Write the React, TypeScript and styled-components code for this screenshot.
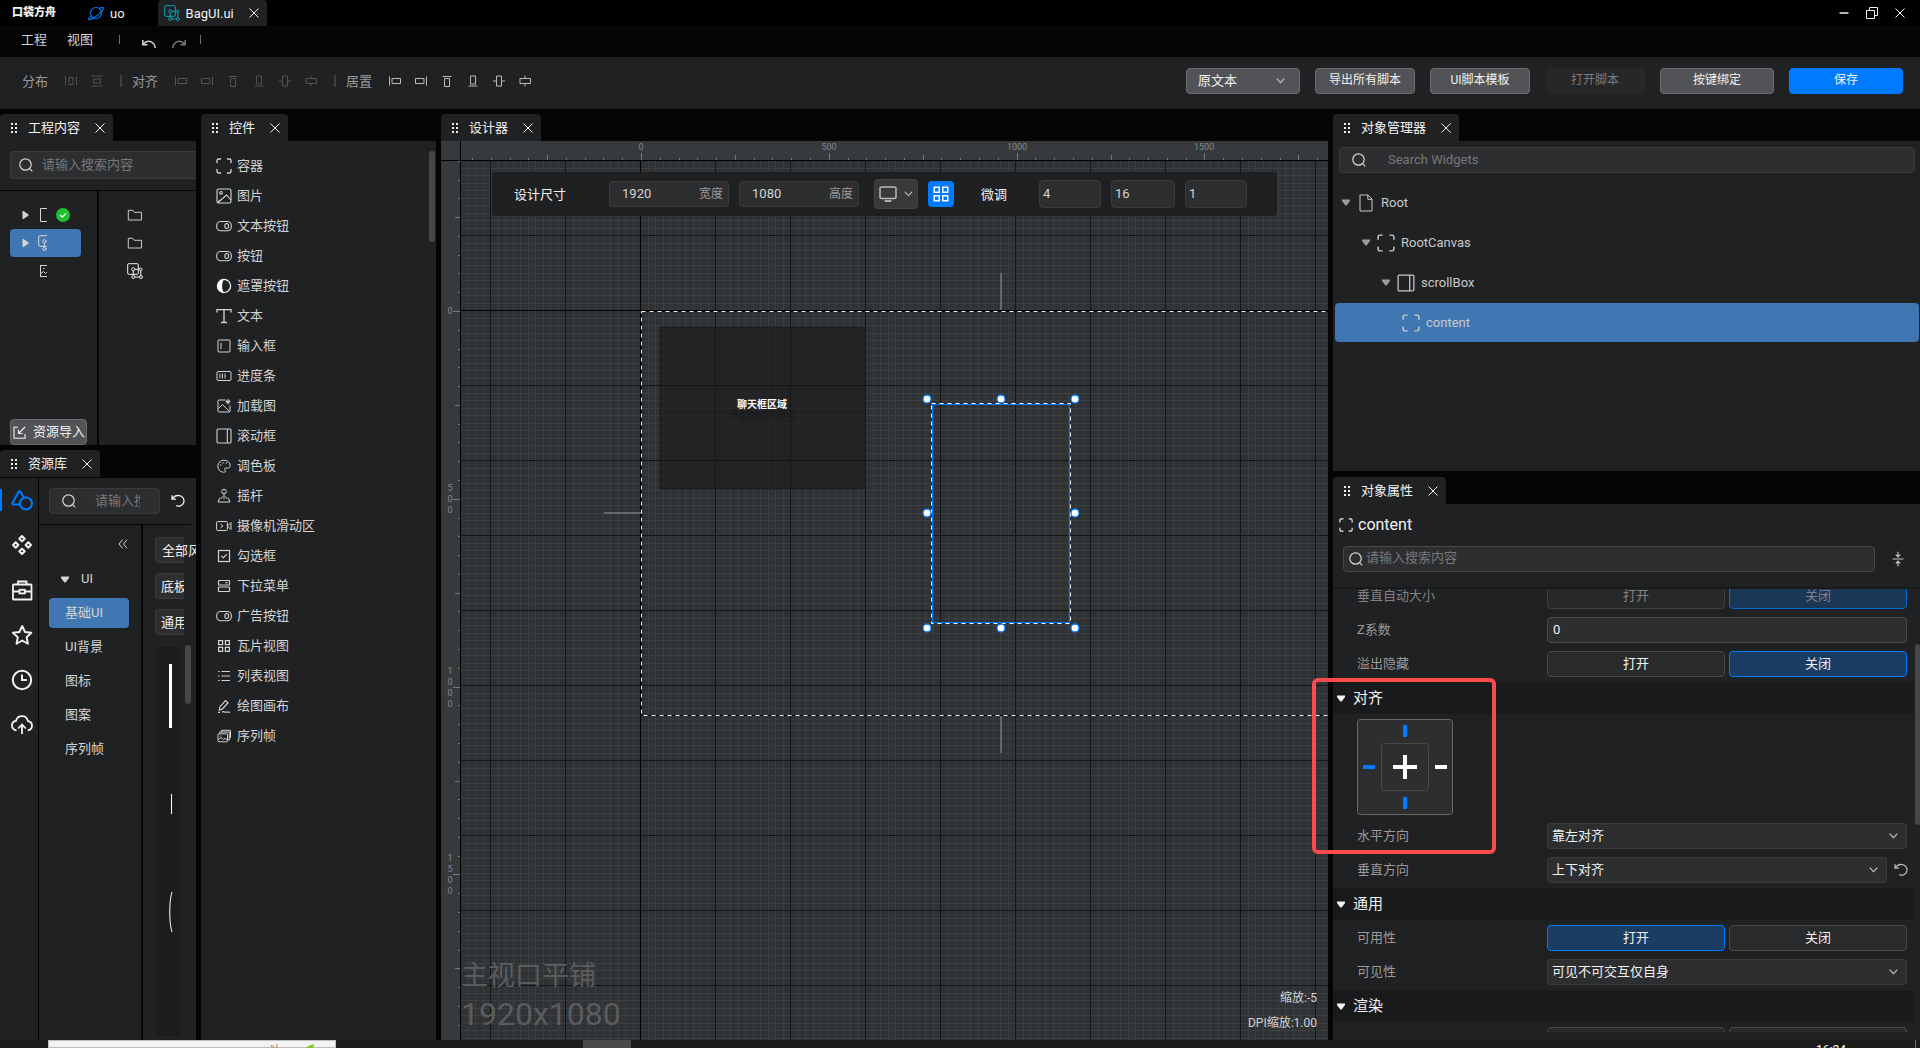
import React from 'react';
import styled, { createGlobalStyle, css } from 'styled-components';

const C = {
  base: '#050505',
  panel: '#202123',
  field: '#2d2e30',
  fieldLine: '#3a3b3d',
  button: '#525356',
  buttonLine: '#6b6c6e',
  blue: '#007aff',
  select: '#4077b2',
  deep: '#1b3d63',
  text: '#d4d4d4',
  bright: '#f2f2f2',
  dim: '#9a9a9b',
  faint: '#77787a',
};

const Global = createGlobalStyle`
  * { box-sizing: border-box; }
  body { margin: 0; background: ${C.base}; overflow: hidden; }
  body, button, input, select {
    font-family: Roboto, "Noto Sans CJK SC", sans-serif;
    font-size: 13px;
    line-height: 20px;
    color: ${C.text};
  }
  button, input, select { margin: 0; padding: 0; border: 0; background: none; outline: 0; }
  ul { list-style: none; margin: 0; padding: 0; }
  svg { display: block; flex: none; }
`;

/* ---------- icons ---------- */

type GlyphProps = { w?: number; h?: number; box?: string; sw?: number; children: React.ReactNode };
const Glyph = ({ w = 16, h, box = '0 0 16 16', sw = 1, children }: GlyphProps) => (
  <svg width={w} height={h ?? w} viewBox={box} fill="none" stroke="currentColor" strokeWidth={sw} aria-hidden="true">
    {children}
  </svg>
);

const Dots = () => (
  <Glyph w={10} h={14} box="0 0 10 14" sw={0}>
    <path fill="currentColor" d="M2 2h2v2H2zM6 2h2v2H6zM2 6h2v2H2zM6 6h2v2H6zM2 10h2v2H2zM6 10h2v2H6z" />
  </Glyph>
);
const Cross = ({ w = 10 }: { w?: number }) => (
  <Glyph w={w} box="0 0 10 10"><path d="M.5.5l9 9M9.5.5l-9 9" /></Glyph>
);
const Search = ({ w = 14 }: { w?: number }) => (
  <Glyph w={w} box="0 0 14 14" sw={1.2}><circle cx="6.5" cy="6.5" r="5.7" /><path d="M10.7 10.7l2.6 2.6" /></Glyph>
);
const Chevron = () => <Glyph w={9} h={6} box="0 0 9 6" sw={1.1}><path d="M.7.7l3.8 4 3.8-4" /></Glyph>;
const TriDown = () => <Glyph w={8} h={7} box="0 0 8 7" sw={0}><path fill="currentColor" d="M0 .5h8V2L4.6 6.5H3.4L0 2z" /></Glyph>;
const TriRight = () => <Glyph w={7} h={8} box="0 0 7 8" sw={0}><path fill="currentColor" d="M.5 0H1.5L6.5 3.5V4.5L1.5 8H.5z" /></Glyph>;
const Reset = ({ w = 14 }: { w?: number }) => (
  <Glyph w={w} box="0 0 14 14" sw={1.3}><path d="M1 1.2v4h4M1.3 5C3 2 6 1.2 8.600 1.700a5.300 5.300 0 1 1-3.600 9.800" /></Glyph>
);
const Blueprint = ({ w = 16 }: { w?: number }) => (
  <Glyph w={w}>
    <rect x="0.700" y="0.700" width="10.600" height="10.600" rx="1" />
    <circle cx="6.300" cy="6.300" r="1.600" /><circle cx="13.700" cy="6.300" r="1.300" />
    <circle cx="6.300" cy="14" r="1.500" /><circle cx="13.900" cy="14" r="1.500" />
    <path d="M8 6.300h4.400M8 14h4.200M6.300 8v4.400M13.800 7.700v4.700" />
  </Glyph>
);
const Container = ({ w = 16 }: { w?: number }) => (
  <Glyph w={w} sw={1.3}><path d="M1 5V2.500A1.500 1.500 0 0 1 2.500 1H5M11 1h2.500A1.500 1.500 0 0 1 15 2.500V5M15 11v2.500a1.500 1.500 0 0 1-1.500 1.500H11M5 15H2.500A1.500 1.500 0 0 1 1 13.500V11" /></Glyph>
);
const Picture = () => (
  <Glyph sw={1.1}><rect x="1" y="1" width="14" height="14" rx="1.500" /><circle cx="5" cy="4.800" r="1.300" /><path d="M2 14.500l8.500-7.500 4.500 5M4.500 12l-2.500 2" /></Glyph>
);
const Toggle = () => (
  <Glyph sw={1.1}><rect x="0.700" y="3.500" width="14.600" height="9.200" rx="4" /><ellipse cx="10.700" cy="8" rx="1.900" ry="2.500" /></Glyph>
);
const Mask = () => (
  <Glyph sw={1.2}><circle cx="8" cy="8" r="6.600" stroke="#fff" /><path fill="#fff" stroke="none" d="M8 1.400a6.600 6.600 0 0 0 0 13.200c-1.300-1.600-1.900-4-1.900-6.600S6.700 3 8 1.400z" /></Glyph>
);
const LetterMark = () => <Glyph sw={1.3}><path d="M1 4.500V1.700h14v2.800M8 1.700v13M5 14.500h6" /></Glyph>;
const InputIcon = () => <Glyph><rect x="2" y="2" width="12" height="12" rx="1" /><path d="M5 4.800v6.400" /></Glyph>;
const Progress = () => <Glyph><rect x="1" y="3.500" width="14" height="9" rx="1" /><path d="M4 5.500v5M6.500 5.500v5M9 5.500v5" /></Glyph>;
const LoadPic = () => (
  <Glyph><path d="M9.500 2H3a1 1 0 0 0-1 1v10a1 1 0 0 0 1 1h10a1 1 0 0 0 1-1V7.500M2.500 10.500l4-4 7 7M12 1v5.400M9.500 3.700h5M10.200 1.900l3.600 3.600M13.800 1.900l-3.600 3.600" /></Glyph>
);
const ScrollIcon = ({ w = 16 }: { w?: number }) => (
  <Glyph w={w} sw={1.1}><rect x="1" y="1" width="14" height="14" rx="1" /><path d="M11.300 1v14" /></Glyph>
);
const Palette = () => (
  <Glyph><path d="M9.500 13.600c-1 .8-1.800.7-3 .5C3.600 13.500 1.700 11 1.800 8 2 4.600 4.700 2.200 8 2.200s6 2.200 6.200 5c.1 2-1 2.900-2.600 2.900H9.700c-1.300.1-1.500 1-.8 2 .4.600.7 1 .6 1.500z" /><path d="M4.300 7h1M6.500 5h1M9.800 5h1" strokeWidth="1.300" /></Glyph>
);
const Joystick = () => (
  <Glyph><circle cx="8" cy="3.500" r="2.300" /><path d="M8 5.800V11M6.500 8.500C6.300 10 5 10 3.500 10.500L2 14h12l-1.500-3.500C11 10 9.700 10 9.500 8.500" /></Glyph>
);
const Camera = () => (
  <Glyph><rect x="0.600" y="3.500" width="10.800" height="9" rx="1" /><path d="M11.500 8l3.500-3.500v7zM4.500 6l2.500 2-2.500 2" /></Glyph>
);
const CheckBoxIcon = () => <Glyph sw={1.2}><rect x="2.500" y="2.500" width="11" height="11" /><path d="M5.300 7.800l2 2 3.500-3.600" /></Glyph>;
const MenuIcon = () => <Glyph sw={1.2}><rect x="2.500" y="2.500" width="11" height="4.500" rx=".5" /><rect x="2.500" y="9" width="11" height="4.500" rx=".5" /><path d="M9.500 4.700h2" /></Glyph>;
const TileIcon = ({ w = 16 }: { w?: number }) => (
  <Glyph w={w} sw={1.200}><path d="M2.600 2.600h4v4h-4zM9.400 2.600h4v4h-4zM2.600 9.400h4v4h-4zM9.400 9.400h4v4h-4z" /></Glyph>
);
const ListIcon = () => <Glyph sw={1.2}><path d="M2 3.500h1.500M5.500 3.500H14M2 8h1.500M5.500 8H14M2 12.500h1.500M5.500 12.500H14" /></Glyph>;
const PenIcon = () => <Glyph sw={1.2}><path d="M3.300 12l.7-3.300L9.500 2.500l2.500 2.200L6.500 11zM2 14.300h2M6 14.300c2-1.600 2.500.3 4-.1s2-.4 4 .1" /></Glyph>;
const SequenceIcon = () => (
  <Glyph><rect x="2" y="5.800" width="9.500" height="8" rx="1" /><path d="M3.700 5.500V4h9.600v8h-1.500M5.500 3.700V2.300h9v7.500h-1M2.500 11.500l2.500-2 2.500 2 1.500-1.200 2 1.500" /><path d="M4.300 8h1" /></Glyph>
);
const FolderIcon = () => <Glyph><path d="M1.300 13V3.300h4.500l1.500 2h7.200V13z" /></Glyph>;
const FileIcon = () => <Glyph w={18} box="0 0 18 18"><path d="M3 1h8l4 4v12H3zM10.800 1v4.300H15" /></Glyph>;
const ImportIcon = () => <Glyph w={13} box="0 0 13 13" sw={1.1}><path d="M5 1.300H1v10.900h11V8M12 1L6 7M5.500 3.700v3.800h4" /></Glyph>;
const Monitor = () => (
  <Glyph w={18} h={16} box="0 0 18 16" sw={1.500}><rect x="1" y="1" width="16" height="11.500" rx="1.500" /><path d="M5.500 15h7" strokeWidth="1.800" /></Glyph>
);
const Planet = () => (
  <Glyph w={16} sw={1.2}><circle cx="8" cy="8" r="5.500" /><path d="M3.500 11C1.200 12.600.3 13.800.8 14.300c.8.900 5.200-1.300 8.900-4.200S16 3.500 15.300 2.600c-.5-.6-2.200-.1-4.200.9" /></Glyph>
);

const Shapes = () => (
  <Glyph w={24} box="0 0 24 24" sw={2}><circle cx="16" cy="15.500" r="6" /><path d="M10.300 16.500H3.500c-1 0-1.300-.8-1-1.500L8.500 4c.5-.9 1.700-.9 2.200 0l3 5.500" /></Glyph>
);
const Diamonds = () => (
  <Glyph w={24} box="0 0 24 24" sw={2}>
    <path d="M12 3l2.700 2.700L12 8.400 9.300 5.700zM12 15.600l2.700 2.700L12 21l-2.700-2.700zM5.700 9.300L8.400 12l-2.700 2.700L3 12zM18.300 9.300L21 12l-2.700 2.700L15.600 12z" strokeLinejoin="round" />
  </Glyph>
);
const Toolbox = () => (
  <Glyph w={24} box="0 0 24 24" sw={1.800}>
    <rect x="3" y="6.500" width="18.500" height="15" rx=".6" /><path d="M8 6V3.500h8.500V6M3 13.500h6.500M14.800 13.500h6.700" /><rect x="9.500" y="11.800" width="5.300" height="3.600" />
  </Glyph>
);
const Star = () => (
  <Glyph w={24} box="0 0 24 24" sw={1.900}><path strokeLinejoin="round" d="M12.200 3l2.800 6 6.300.8-4.700 4.400 1.300 6.600-5.700-3.300-5.700 3.300 1.300-6.600L2.800 9.800 9.400 9z" /></Glyph>
);
const Clock = () => <Glyph w={24} box="0 0 24 24" sw={2}><circle cx="12" cy="12" r="9.200" /><path d="M12 6.500V12h5" /></Glyph>;
const Cloud = () => (
  <Glyph w={24} box="0 0 24 24" sw={1.800}>
    <path d="M6.500 17.500C3.500 16.800 2 15 2 12.500s2-4.300 4-4.600C6.800 4.800 9 3.200 12 3.200s5.300 2 6 5c2.500.4 4 2.200 4 4.500 0 2.500-1.600 4.300-4.300 4.700M12 21v-9M8.200 15.500l3.800-4 3.800 4" />
  </Glyph>
);

const alignPaths: Record<string, string> = {
  distH: 'M1.500 2.500v9M12.500 2.500v9M5 3.500h4v7H5z',
  distV: 'M1.500 2h11M1.500 12h11M3.500 5h7v4h-7z',
  left: 'M1.500 2.500v9M4 4.500h8.500v5H4z',
  right: 'M12.500 2.500v9M1.500 4.500H10v5H1.500z',
  top: 'M2.500 2.500h9M4.500 4.500h5v8h-5z',
  bottom: 'M2.500 12h9M4.500 2h5v8h-5z',
  midH: 'M4.500 2h5v10h-5zM1 7h3.500M9.500 7H13',
  midV: 'M2 4.500h10.500v5H2zM7 1.500v3M7 9.500v3',
};
const AlignIcon = ({ kind }: { kind: string }) => (
  <Glyph w={14} box="0 0 14 14"><path d={alignPaths[kind]} /></Glyph>
);

/* ---------- shared parts ---------- */

const Shell = styled.div`
  display: flex;
  flex-direction: column;
  height: 100vh;
  background: ${C.base};
`;
const IconButton = styled.button<{ $color?: string }>`
  display: flex;
  align-items: center;
  justify-content: center;
  color: ${p => p.$color ?? C.bright};
`;
const TabBar = styled.div`display: flex; height: 27px; flex: none;`;
const TabBox = styled.div`
  display: flex;
  align-items: center;
  padding: 0 8px 0 9px;
  border-radius: 4px 4px 0 0;
  background: ${C.panel};
  color: ${C.bright};
  white-space: nowrap;
`;
const TabName = styled.span`margin: 0 15px 0 9px; padding-top: 1px;`;
const Tab = ({ name }: { name: string }) => (
  <TabBar>
    <TabBox>
      <Dots /><TabName>{name}</TabName>
      <IconButton aria-label={`关闭${name}`}><Cross /></IconButton>
    </TabBox>
  </TabBar>
);
const Field = styled.label<{ $h?: number }>`
  display: flex;
  align-items: center;
  height: ${p => p.$h ?? 26}px;
  min-width: 0;
  border: 1px solid ${C.fieldLine};
  border-radius: 4px;
  background: ${C.field};
`;
const TextInput = styled.input`
  flex: 1;
  width: 0;
  min-width: 0;
  height: 20px;
  &::placeholder { color: ${C.faint}; opacity: 1; }
`;
const Thumb = styled.div<{ $h: number }>`
  width: 6px;
  height: ${p => p.$h}px;
  flex: none;
  border-radius: 3px;
  background: #454648;
`;

/* ---------- title, menu and tool bars ---------- */

const TitleBar = styled.header`
  display: flex;
  align-items: center;
  height: 26px;
  flex: none;
  padding: 0 15px 0 12px;
  background: #000;
  color: ${C.bright};
`;
const Logo = styled.span`width: 76px; font-size: 11px; font-weight: 900;`;
const DocName = styled.span`padding-top: 2px;`;
const DocTab = styled.div<{ $active?: boolean; $tint: string }>`
  display: flex;
  align-items: center;
  height: 26px;
  gap: 6px;
  > svg { color: ${p => p.$tint}; }
  ${p => p.$active && css`
    margin-left: 33px;
    padding: 0 8px 0 6px;
    border-radius: 4px 4px 0 0;
    background: ${C.panel};
    button { margin-left: 9px; }
  `}
`;
const WindowButtons = styled.div`display: flex; gap: 17px; margin-left: auto;`;
const MenuBar = styled.nav`
  display: flex;
  align-items: center;
  height: 31px;
  flex: none;
  padding: 0 21px 4px;
`;
const MenuItem = styled.button`margin-right: 20px;`;
const MenuRule = styled.i`width: 1px; height: 9px; background: #6d6d6d;`;
const History = styled.div`display: flex; gap: 16px; margin: 0 14px 0 22px; padding-top: 9px;`;
const MenuTools = styled.div`display: flex; align-items: center; margin-left: 6px;`;
const ToolBar = styled.div`
  display: flex;
  align-items: center;
  height: 52px;
  flex: none;
  padding: 0 17px 4px 22px;
  background: ${C.panel};
`;
const ToolLabel = styled.span`margin-right: 16px; padding-top: 2px; color: ${C.dim};`;
const ToolGroup = styled.div<{ $off?: boolean }>`
  display: flex;
  gap: 12px;
  button { color: ${p => (p.$off ? '#525355' : '#b9babb')}; }
`;
const ToolRule = styled.i`width: 2px; height: 12px; margin: 0 10px 0 16px; background: #3c3d3f;`;
const ToolActions = styled.div`display: flex; gap: 15px; margin-left: auto;`;
const ActionButton = styled.button<{ $w: number; $kind?: 'primary' | 'off' }>`
  width: ${p => p.$w}px;
  height: 26px;
  padding-bottom: 2px;
  border: 1px solid ${C.buttonLine};
  border-radius: 4px;
  background: ${C.button};
  color: ${C.bright};
  font-size: 12px;
  ${p => p.$kind === 'primary' && css`border-color: ${C.blue}; background: ${C.blue};`}
  ${p => p.$kind === 'off' && css`border-color: #262729; background: #262729; color: #7c7d7e;`}
`;

const SelectBox = styled.span<{ $button?: boolean }>`
  position: relative;
  display: flex;
  flex: 1;
  height: 26px;
  border: 1px solid ${p => (p.$button ? C.buttonLine : C.fieldLine)};
  border-radius: 4px;
  background: ${p => (p.$button ? C.button : C.field)};
  ${p => p.$button && css`flex: none; width: 114px;`}
  select { appearance: none; flex: 1; padding: 0 ${p => (p.$button ? 11 : 4)}px; color: ${C.bright}; }
  svg { position: absolute; right: ${p => (p.$button ? 14 : 8)}px; top: 9px; pointer-events: none; color: #c4c4c5; }
`;
const Select = ({ label, value, button }: { label: string; value: string; button?: boolean }) => (
  <SelectBox $button={button}>
    <select aria-label={label} defaultValue={value}><option>{value}</option></select>
    <Chevron />
  </SelectBox>
);

/* ---------- work area ---------- */

const Work = styled.main`
  display: grid;
  grid-template-columns: 196px 235px minmax(0, 1fr) 587px;
  gap: 5px;
  flex: 1;
  min-height: 0;
  padding-top: 5px;
`;
const Column = styled.div<{ $gap?: number }>`
  display: flex;
  flex-direction: column;
  gap: ${p => p.$gap ?? 0}px;
  min-width: 0;
  min-height: 0;
`;
const Panel = styled.section<{ $grow?: boolean }>`
  position: relative;
  display: flex;
  flex-direction: column;
  min-height: 0;
  ${p => p.$grow && css`flex: 1;`}
`;
const Body = styled.div<{ $h?: number; $row?: boolean; $line?: boolean }>`
  display: flex;
  flex-direction: ${p => (p.$row ? 'row' : 'column')};
  min-height: 0;
  background: ${C.panel};
  ${p => (p.$h ? css`height: ${p.$h}px;` : css`flex: 1;`)}
  ${p => p.$line && css`border-top: 1px solid ${C.base};`}
  overflow: hidden;
`;

const ProjectSearch = styled.div`
  padding: 10px 0 11px 10px;
  border-bottom: 1px solid ${C.base};
  label { border-right: 0; border-radius: 4px 0 0 4px; padding-left: 8px; gap: 9px; }
`;
const Split = styled.div`display: flex; flex: 1; min-height: 0;`;
const TreeSide = styled.div`
  display: flex;
  flex-direction: column;
  width: 99px;
  padding-top: 10px;
  border-right: 2px solid ${C.base};
`;
const TreeNode = styled.button<{ $on?: boolean; $leaf?: boolean }>`
  display: flex;
  align-items: center;
  gap: 9px;
  width: 71px;
  height: 28px;
  margin-left: 10px;
  padding-left: ${p => (p.$leaf ? 28 : 12)}px;
  border-radius: 4px;
  background: ${p => (p.$on ? C.select : 'none')};
`;
const IconSlice = styled.span`width: 9px; overflow: hidden;`;
const ImportButton = styled.button`
  display: flex;
  align-items: center;
  gap: 7px;
  width: 77px;
  height: 26px;
  margin: auto 0 0 10px;
  padding-left: 2px;
  border: 1px solid ${C.buttonLine};
  border-radius: 4px;
  background: ${C.button};
  color: ${C.bright};
  white-space: nowrap;
`;
const AssetSide = styled.div`
  flex: 1;
  padding: 10px 0 0 28px;
  button { height: 28px; }
`;

const Rail = styled.div`width: 39px; flex: none; border-right: 1px solid ${C.base};`;
const RailButton = styled.button<{ $on?: boolean }>`
  position: relative;
  display: flex;
  align-items: center;
  width: 38px;
  height: 45px;
  padding: 0 0 2px 10px;
  color: ${p => (p.$on ? C.blue : C.bright)};
  ${p => p.$on && css`
    &::before { content: ''; position: absolute; left: 0; top: 11px; width: 2px; height: 22px; background: ${C.blue}; }
  `}
`;
const LibrarySearch = styled.div`
  display: flex;
  align-items: center;
  gap: 11px;
  height: 47px;
  padding-left: 10px;
  border-bottom: 1px solid ${C.base};
  label { width: 111px; padding: 0 19px 0 12px; gap: 19px; }
`;
const CategoryList = styled.div`width: 104px; flex: none; border-right: 2px solid ${C.base};`;
const Collapse = styled.button`
  display: flex;
  align-items: center;
  justify-content: flex-end;
  width: 89px;
  height: 37px;
`;
const CategoryHead = styled.button`
  display: flex;
  align-items: center;
  gap: 12px;
  height: 34px;
  padding-left: 22px;
`;
const Category = styled.button<{ $on?: boolean }>`
  display: block;
  width: 80px;
  height: 30px;
  margin: 2px 0 4px 10px;
  padding-left: 16px;
  border-radius: 4px;
  background: ${p => (p.$on ? C.select : 'none')};
  text-align: left;
`;
const StyleList = styled.div`
  display: flex;
  flex-direction: column;
  flex: 1;
  gap: 10px;
  padding: 12px 0 3px 12px;
`;
const StyleChip = styled.button<{ $open?: boolean }>`
  width: 29px;
  height: 26px;
  flex: none;
  padding: 2px 0 0 ${p => (p.$open ? 6 : 5)}px;
  border: 1px solid ${C.fieldLine};
  border-right: 0;
  border-radius: 4px 0 0 4px;
  background: ${C.field};
  color: ${C.bright};
  text-align: left;
  white-space: nowrap;
  overflow: ${p => (p.$open ? 'visible' : 'hidden')};
`;
const Preview = styled.div`
  width: 27px;
  border: 1px solid #232426;
  border-radius: 4px;
  background: #1b1c1e;
  overflow: hidden;
`;
const PreviewRow = styled.div`display: flex; flex: 1; gap: 3px; min-height: 0;`;

const WidgetList = styled.ul`flex: 1; padding: 10px 0 0 15px;`;
const WidgetButton = styled.button`display: flex; align-items: center; gap: 5px; height: 30px;`;
const ListScroll = styled.div`padding: 10px 1px 0 0;`;

const widgets: [string, React.ReactNode][] = [
  ['容器', <Container />], ['图片', <Picture />], ['文本按钮', <Toggle />], ['按钮', <Toggle />],
  ['遮罩按钮', <Mask />], ['文本', <LetterMark />], ['输入框', <InputIcon />], ['进度条', <Progress />],
  ['加载图', <LoadPic />], ['滚动框', <ScrollIcon />], ['调色板', <Palette />], ['摇杆', <Joystick />],
  ['摄像机滑动区', <Camera />], ['勾选框', <CheckBoxIcon />], ['下拉菜单', <MenuIcon />], ['广告按钮', <Toggle />],
  ['瓦片视图', <TileIcon />], ['列表视图', <ListIcon />], ['绘图画布', <PenIcon />], ['序列帧', <SequenceIcon />],
];

/* ---------- designer ---------- */

const Stage = styled.div`
  display: grid;
  grid-template: 20px minmax(0, 1fr) / 20px minmax(0, 1fr);
  flex: 1;
  min-height: 0;
  background: #363a3c;
`;
const Corner = styled.div`border-right: 1px solid #000; border-bottom: 1px solid #000;`;
const RulerX = styled.div`border-bottom: 1px solid #000; overflow: hidden;`;
const RulerY = styled.div`border-right: 1px solid #000; overflow: hidden;`;
const RulerText = styled.text`font-size: 9px; fill: #85878a; stroke: none; text-anchor: middle;`;
const Canvas = styled.div`position: relative; overflow: hidden; background: #303335;`;
const Layer = styled.svg`position: absolute; inset: 0; width: 100%; height: 100%;`;
const Watermark = styled.div`
  position: absolute;
  left: 0;
  bottom: 7px;
  color: #5b5c5d;
  font-size: 27px;
  line-height: 38px;
`;
const WatermarkSize = styled.div`font-size: 32px;`;
const ZoomInfo = styled.div`
  position: absolute;
  right: 11px;
  bottom: 4px;
  font-size: 12px;
  line-height: 25px;
  text-align: right;
`;
const ChatArea = styled.div`
  position: absolute;
  left: 198px;
  top: 165px;
  display: flex;
  flex-direction: column;
  align-items: center;
  justify-content: center;
  width: 206px;
  height: 164px;
  padding-top: 4px;
  border-radius: 3px;
  background: rgba(22, 23, 24, 0.6);
  color: #fff;
  font-size: 10px;
  font-weight: 700;
  line-height: 10px;
`;
const ChatNote = styled.span`color: #17181a; font-size: 8px; font-weight: 400;`;
const SizeBar = styled.div`
  position: absolute;
  left: 31px;
  top: 11px;
  display: flex;
  align-items: center;
  height: 44px;
  padding: 0 30px 0 22px;
  border-radius: 4px;
  background: #1f2022;
  color: ${C.bright};
`;
const SizeTitle = styled.span<{ $after: number }>`margin-right: ${p => p.$after}px; padding-top: 1px;`;
const SizeField = styled(Field)`
  width: 120px;
  margin-right: 10px;
  padding: 0 5px 0 12px;
  color: ${C.dim};
  font-size: 12px;
`;
const StepField = styled(Field)<{ $w: number }>`
  width: ${p => p.$w}px;
  margin-left: 10px;
  padding-left: 3px;
`;
const DeviceButton = styled.button`
  display: flex;
  align-items: center;
  justify-content: center;
  gap: 7px;
  width: 44px;
  height: 30px;
  margin: 0 10px 0 5px;
  border: 1px solid #434446;
  border-radius: 4px;
  background: #38393b;
  color: #b9b9ba;
`;
const GridButton = styled.button`
  display: flex;
  align-items: center;
  justify-content: center;
  width: 26px;
  height: 26px;
  margin-right: 27px;
  border-radius: 4px;
  background: ${C.blue};
  color: #fff;
`;

const UNIT = 0.3756;
const marks = (from: number, to: number) => {
  const out: number[] = [];
  for (let v = from; v <= to; v += 50) out.push(v);
  return out;
};
const tickLength = (v: number) => (v % 500 === 0 ? 7 : v % 250 === 0 ? 5 : 2);

const HorizontalRuler = () => (
  <svg width="100%" height="19" stroke="#77797b" shapeRendering="crispEdges">
    {marks(-450, 8000).map(v => {
      const x = Math.round(180 + v * UNIT) + 0.5;
      return <path key={v} d={`M${x} ${19 - tickLength(v)}V19`} />;
    })}
    {marks(0, 8000).filter(v => v % 500 === 0).map(v => (
      <RulerText key={v} x={Math.round(180 + v * UNIT)} y={9}>{v}</RulerText>
    ))}
  </svg>
);
const VerticalRuler = () => (
  <svg width="19" height="100%" stroke="#77797b" shapeRendering="crispEdges">
    {marks(-400, 6000).map(v => {
      const y = Math.round(150 + v * UNIT) + 0.5;
      return <path key={v} d={`M${19 - tickLength(v)} ${y}H19`} />;
    })}
    {marks(0, 6000).filter(v => v % 500 === 0).map(v => {
      const digits = String(v).split('');
      const mid = Math.round(150 + v * UNIT);
      return digits.map((d, i) => (
        <RulerText key={`${v}-${i}`} x={9} y={mid + 3 + Math.round((i - (digits.length - 1) / 2) * 11)}>{d}</RulerText>
      ));
    })}
  </svg>
);

const minor = [8, 15, 23, 30, 38, 45, 53, 60, 68];
const Grid = () => (
  <Layer aria-hidden="true">
    <defs>
      <pattern id="grid" x="29" y="74" width="75" height="75" patternUnits="userSpaceOnUse">
        <path stroke="#3c3e40" shapeRendering="crispEdges" d={minor.map(m => `M${m}.5 0V75M0 ${m}.5H75`).join('')} />
        <path stroke="#151617" shapeRendering="crispEdges" d="M.5 0V75M0 .5H75" />
      </pattern>
    </defs>
    <rect width="100%" height="100%" fill="url(#grid)" />
    <rect x="179" width="1" height="100%" fill="#000" />
    <rect y="149" width="100%" height="1" fill="#000" />
  </Layer>
);
const handles = [466, 540, 614].flatMap(x => [238, 352, 467].map(y => [x, y])).filter(([x, y]) => x !== 540 || y !== 352);
const Frames = () => (
  <Layer aria-hidden="true" fill="none">
    <path stroke="#66686a" strokeWidth="2" d="M540 112v37M540 555v37M143 352h37" />
    <rect x="180.500" y="150.500" width="721" height="404" stroke="#000" />
    <rect x="180.500" y="150.500" width="721" height="404" stroke="#fff" strokeDasharray="4 4" />
    <rect x="471.500" y="243.500" width="137" height="218" stroke={C.blue} strokeWidth="1" />
    <rect x="470.500" y="242.500" width="139" height="220" stroke="#0a2e5c" />
    <rect x="470.500" y="242.500" width="139" height="220" stroke="#fff" strokeDasharray="4 4" />
    {handles.map(([x, y]) => <circle key={`${x}-${y}`} cx={x} cy={y} r="4" fill="#fff" stroke={C.blue} strokeWidth="1.300" />)}
  </Layer>
);

/* ---------- object manager and properties ---------- */

const ManagerSearch = styled(Field)`margin: 6px 5px 10px 6px; padding-left: 12px; gap: 22px; flex: none;`;
const ObjectList = styled.div`display: flex; flex-direction: column; gap: 1px;`;
const ObjectRow = styled.button<{ $depth: number; $on?: boolean }>`
  display: flex;
  align-items: center;
  height: 39px;
  margin: 0 1px 0 2px;
  padding-left: ${p => 7 + p.$depth * 20}px;
  border-radius: 4px;
  background: ${p => (p.$on ? C.select : 'none')};
  color: #c9c9ca;
`;
const Caret = styled.span`width: 8px; margin-right: 7px; color: #9b9c9d;`;
const ObjectName = styled.span`margin-left: 6px;`;

const objects: [string, React.ReactNode, boolean][] = [
  ['Root', <FileIcon />, true],
  ['RootCanvas', <Container w={18} />, true],
  ['scrollBox', <ScrollIcon w={18} />, true],
  ['content', <Container w={18} />, false],
];

const PropHead = styled.h2`
  display: flex;
  align-items: center;
  gap: 5px;
  height: 42px;
  margin: 0;
  padding-left: 6px;
  color: ${C.bright};
  font-size: 16px;
  font-weight: 400;
`;
const PropSearch = styled.div`
  display: flex;
  align-items: center;
  gap: 15px;
  height: 41px;
  padding: 0 14px 15px 10px;
  border-bottom: 0;
  flex: none;
  label { flex: 1; border-color: #47484a; padding-left: 5px; gap: 3px; }
  input { margin-bottom: 3px; }
`;
const PropScroll = styled.div`
  display: flex;
  flex: 1;
  margin-bottom: 8px;
  min-height: 0;
  border-top: 2px solid #191a1b;
  overflow: hidden;
`;
const PropList = styled.div`flex: 1; margin-top: -10px;`;
const PropThumb = styled(Thumb)`width: 5px; margin: 55px 0 0 1px;`;
const PropRow = styled.div<{ $tall?: boolean; $off?: boolean }>`
  display: flex;
  align-items: ${p => (p.$tall ? 'flex-start' : 'center')};
  height: ${p => (p.$tall ? 104 : 34)}px;
  padding: 4px 7px 4px 24px;
  opacity: ${p => (p.$off ? 0.8 : 1)};
`;
const PropName = styled.span`width: 190px; flex: none; color: ${C.dim};`;
const PropValue = styled.div`
  display: flex;
  flex: 1;
  gap: 4px;
  label { flex: 1; padding-left: 5px; border-color: #47484a; }
  input { color: ${C.bright}; }
`;
const Choice = styled.button<{ $on?: boolean; $off?: boolean }>`
  flex: 1;
  height: 26px;
  border: 1px solid ${p => (p.$on ? C.blue : '#47484a')};
  border-radius: 4px;
  background: ${p => (p.$on ? C.deep : '#292a2c')};
  color: ${p => (p.$off ? '#9a9b9c' : C.bright)};
`;
const ResetButton = styled(IconButton)`width: 16px; margin: 0 -2px 0 2px;`;
const Section = styled.button`
  display: flex;
  align-items: center;
  gap: 8px;
  width: 100%;
  height: 32px;
  margin: 1px 0;
  padding-left: 4px;
  background: #191a1b;
  color: ${C.bright};
  font-size: 15px;
`;
const AnchorButton = styled.button`
  display: flex;
  width: 96px;
  height: 96px;
`;
const Callout = styled.div`
  position: absolute;
  left: -21px;
  top: 201px;
  width: 184px;
  height: 176px;
  border: 4px solid #f94b4b;
  border-radius: 6px;
  pointer-events: none;
`;

const Switch = ({ name, value, off }: { name: string; value?: boolean; off?: boolean }) => (
  <PropRow $off={off}>
    <PropName>{name}</PropName>
    <PropValue>
      <Choice $on={value === true} $off={off}>打开</Choice>
      <Choice $on={value === false} $off={off}>关闭</Choice>
    </PropValue>
  </PropRow>
);
const Pick = ({ name, value, reset }: { name: string; value: string; reset?: boolean }) => (
  <PropRow>
    <PropName>{name}</PropName>
    <PropValue>
      <Select label={name} value={value} />
      {reset && <ResetButton aria-label="重置" $color="#b5b5b6"><Reset /></ResetButton>}
    </PropValue>
  </PropRow>
);

/* ---------- task bar ---------- */

const TaskBar = styled.footer`
  display: flex;
  height: 8px;
  flex: none;
  padding-left: 48px;
  background: #1c1c1c;
  overflow: hidden;
`;
const TaskSearch = styled.div`
  display: flex;
  gap: 24px;
  width: 288px;
  margin-right: 247px;
  padding: 3px 0 0 220px;
  border: 1px solid #bdbdbd;
  background: #f2f2f2;
`;
const TaskItem = styled.div`width: 48px; background: #4a4a4a;`;
const TaskTime = styled.time`
  margin: 4px 69px 0 auto;
  color: #fff;
  font-size: 12px;
  line-height: 12px;
`;
const TaskEdge = styled.i`width: 5px; border-left: 1px solid #6a6a6a;`;

export default function App() {
  return (
    <Shell>
      <Global />
      <TitleBar>
        <Logo>口袋方舟</Logo>
        <DocTab $tint={C.blue}><Planet /><DocName>uo</DocName></DocTab>
        <DocTab $active $tint="#0fa3b8">
          <Blueprint /><DocName>BagUI.ui</DocName><IconButton aria-label="关闭 BagUI.ui"><Cross /></IconButton>
        </DocTab>
        <WindowButtons>
          <IconButton aria-label="最小化"><Glyph w={10} box="0 0 10 10" sw={1.500}><path d="M.5 5h9" /></Glyph></IconButton>
          <IconButton aria-label="还原"><Glyph w={12} box="0 0 12 12"><path d="M.5 3.500h8v8h-8zM3.500 3.500v-3h8v8h-3" /></Glyph></IconButton>
          <IconButton aria-label="关闭"><Cross /></IconButton>
        </WindowButtons>
      </TitleBar>
      <MenuBar>
        <MenuItem>工程</MenuItem>
        <MenuItem>视图</MenuItem>
        <MenuTools>
          <MenuRule />
          <History>
            <IconButton aria-label="撤销" $color="#d0d0d0"><Glyph w={14} box="0 0 14 14" sw={1.500}><path d="M.8 3v4.700h4.700M1.200 7.300C3.500 4.400 7 3.600 9.800 5.200c2.200 1.300 3.200 3.300 3.500 5.800" /></Glyph></IconButton>
            <IconButton aria-label="重做" $color="#77787a"><Glyph w={14} box="0 0 14 14" sw={1.500}><path d="M13.200 3v4.700H8.500M12.800 7.300C10.500 4.400 7 3.600 4.200 5.200 2 6.500 1 8.500.7 11" /></Glyph></IconButton>
          </History>
          <MenuRule />
        </MenuTools>
      </MenuBar>
      <ToolBar>
        <ToolLabel>分布</ToolLabel>
        <ToolGroup $off>
          {['distH', 'distV'].map(k => <IconButton key={k} aria-label={k}><AlignIcon kind={k} /></IconButton>)}
        </ToolGroup>
        <ToolRule />
        <ToolLabel>对齐</ToolLabel>
        <ToolGroup $off>
          {['left', 'right', 'top', 'bottom', 'midH', 'midV'].map(k => <IconButton key={k} aria-label={k}><AlignIcon kind={k} /></IconButton>)}
        </ToolGroup>
        <ToolRule />
        <ToolLabel>居置</ToolLabel>
        <ToolGroup>
          {['left', 'right', 'top', 'bottom', 'midH', 'midV'].map(k => <IconButton key={k} aria-label={k}><AlignIcon kind={k} /></IconButton>)}
        </ToolGroup>
        <ToolActions>
          <Select button label="文本语言" value="原文本" />
          <ActionButton $w={100}>导出所有脚本</ActionButton>
          <ActionButton $w={100}>UI脚本模板</ActionButton>
          <ActionButton $w={100} $kind="off">打开脚本</ActionButton>
          <ActionButton $w={114}>按键绑定</ActionButton>
          <ActionButton $w={114} $kind="primary">保存</ActionButton>
        </ToolActions>
      </ToolBar>

      <Work>
        <Column $gap={5}>
          <Panel>
            <Tab name="工程内容" />
            <Body $h={304}>
              <ProjectSearch>
                <Field $h={28}><Search /><TextInput aria-label="搜索工程内容" placeholder="请输入搜索内容" /></Field>
              </ProjectSearch>
              <Split>
                <TreeSide>
                  <TreeNode aria-label="文件夹">
                    <TriRight /><IconSlice><Glyph><path d="M9 1.500H2.500v13H9" /></Glyph></IconSlice>
                    <Glyph w={14} box="0 0 14 14"><circle cx="7" cy="7" r="7" fill="#1fc131" stroke="none" /><path stroke="#fff" strokeWidth="1.300" d="M4 7l2.200 2.200L10 5.400" /></Glyph>
                  </TreeNode>
                  <TreeNode $on aria-label="界面">
                    <TriRight /><IconSlice><Blueprint /></IconSlice>
                  </TreeNode>
                  <TreeNode $leaf aria-label="图片">
                    <IconSlice><Glyph><rect x="2.500" y="2.500" width="12" height="11" /><path d="M5 5.500h1.500M3 10.500l2.500-2 2 2 2-2" /></Glyph></IconSlice>
                  </TreeNode>
                  <ImportButton><ImportIcon />资源导入</ImportButton>
                </TreeSide>
                <AssetSide>
                  <IconButton aria-label="文件夹" $color="#c9c9ca"><FolderIcon /></IconButton>
                  <IconButton aria-label="文件夹" $color="#c9c9ca"><FolderIcon /></IconButton>
                  <IconButton aria-label="界面"><Blueprint /></IconButton>
                </AssetSide>
              </Split>
            </Body>
          </Panel>
          <Panel $grow>
            <Tab name="资源库" />
            <Body $row $line>
              <Rail>
                <RailButton $on aria-label="图形"><Shapes /></RailButton>
                <RailButton aria-label="组件"><Diamonds /></RailButton>
                <RailButton aria-label="工具箱"><Toolbox /></RailButton>
                <RailButton aria-label="收藏"><Star /></RailButton>
                <RailButton aria-label="最近"><Clock /></RailButton>
                <RailButton aria-label="上传"><Cloud /></RailButton>
              </Rail>
              <Column>
                <LibrarySearch>
                  <Field><Search /><TextInput aria-label="搜索资源库" placeholder="请输入搜索内容" /></Field>
                  <IconButton aria-label="刷新"><Reset /></IconButton>
                </LibrarySearch>
                <Split>
                  <CategoryList>
                    <Collapse aria-label="收起"><Glyph w={10} box="0 0 10 10"><path d="M4.500.7L1 5l3.500 4.300M9 .7L5.500 5 9 9.300" /></Glyph></Collapse>
                    <CategoryHead><TriDown />UI</CategoryHead>
                    {['基础UI', 'UI背景', '图标', '图案', '序列帧'].map((c, i) => <Category key={c} $on={i === 0}>{c}</Category>)}
                  </CategoryList>
                  <StyleList>
                    <StyleChip $open>全部风格</StyleChip>
                    <StyleChip>底板</StyleChip>
                    <StyleChip>通用</StyleChip>
                    <PreviewRow>
                      <Preview>
                        <svg width="25" height="300" fill="none" stroke="#fff" aria-hidden="true">
                          <path strokeWidth="3" d="M14.500 18v64" />
                          <path d="M15.500 148v20" />
                          <path d="M16 246c-3 8-3 32 0 40" />
                        </svg>
                      </Preview>
                      <Thumb $h={59} />
                    </PreviewRow>
                  </StyleList>
                </Split>
              </Column>
            </Body>
          </Panel>
        </Column>

        <Panel>
          <Tab name="控件" />
          <Body $row>
            <WidgetList>
              {widgets.map(([name, icon]) => <li key={name}><WidgetButton>{icon}{name}</WidgetButton></li>)}
            </WidgetList>
            <ListScroll><Thumb $h={91} /></ListScroll>
          </Body>
        </Panel>

        <Panel>
          <Tab name="设计器" />
          <Stage>
            <Corner />
            <RulerX><HorizontalRuler /></RulerX>
            <RulerY><VerticalRuler /></RulerY>
            <Canvas>
              <Grid />
              <ChatArea>聊天框区域<ChatNote>不支持缩放与移动</ChatNote></ChatArea>
              <Frames />
              <Watermark>主视口平铺<WatermarkSize>1920x1080</WatermarkSize></Watermark>
              <ZoomInfo>缩放:-5<br />DPI缩放:1.00</ZoomInfo>
              <SizeBar>
                <SizeTitle $after={43}>设计尺寸</SizeTitle>
                <SizeField><TextInput defaultValue="1920" />宽度</SizeField>
                <SizeField><TextInput defaultValue="1080" />高度</SizeField>
                <DeviceButton aria-label="设备"><Monitor /><Chevron /></DeviceButton>
                <GridButton aria-label="网格"><TileIcon w={20} /></GridButton>
                <SizeTitle $after={22}>微调</SizeTitle>
                <StepField $h={28} $w={62}><TextInput aria-label="微调 1" defaultValue="4" /></StepField>
                <StepField $h={28} $w={64}><TextInput aria-label="微调 2" defaultValue="16" /></StepField>
                <StepField $h={28} $w={62}><TextInput aria-label="微调 3" defaultValue="1" /></StepField>
              </SizeBar>
            </Canvas>
          </Stage>
        </Panel>

        <Column $gap={6}>
          <Panel>
            <Tab name="对象管理器" />
            <Body $h={330}>
              <ManagerSearch><Search /><TextInput aria-label="搜索控件" placeholder="Search Widgets" /></ManagerSearch>
              <ObjectList>
                {objects.map(([name, icon, open], i) => (
                  <ObjectRow key={name} $depth={i} $on={!open}>
                    {open ? <Caret><TriDown /></Caret> : null}{icon}<ObjectName>{name}</ObjectName>
                  </ObjectRow>
                ))}
              </ObjectList>
            </Body>
          </Panel>
          <Panel $grow>
            <Tab name="对象属性" />
            <Body>
              <PropHead><Container w={14} />content</PropHead>
              <PropSearch>
                <Field><Search /><TextInput aria-label="搜索属性" placeholder="请输入搜索内容" /></Field>
                <IconButton aria-label="全部折叠" $color="#c4c4c5">
                  <Glyph w={16} sw={1.200}><path d="M2.500 8h11M8 .8v5M8 15.200v-5M5.800 3.700L8 6l2.200-2.300M5.800 12.300L8 10l2.200 2.300" /></Glyph>
                </IconButton>
              </PropSearch>
              <PropScroll>
                <PropList>
                  <Switch name="垂直自动大小" value={false} off />
                  <PropRow>
                    <PropName>Z系数</PropName>
                    <PropValue><Field><TextInput aria-label="Z系数" defaultValue="0" /></Field></PropValue>
                  </PropRow>
                  <Switch name="溢出隐藏" value={false} />
                  <Section><TriDown />对齐</Section>
                  <PropRow $tall>
                    <AnchorButton aria-label="对齐方式">
                      <svg width="96" height="96" fill="none" aria-hidden="true">
                        <rect x="0.500" y="0.500" width="95" height="95" rx="3" fill="#2d2e30" stroke="#68696b" />
                        <rect x="24.500" y="24.500" width="47" height="47" rx="3" stroke="#47484a" />
                        <path stroke="#007aff" strokeWidth="4" d="M48 6v12M48 78v12M6 48h12" />
                        <path stroke="#fff" strokeWidth="4" d="M78 48h12M36 48h24M48 36v24" />
                      </svg>
                    </AnchorButton>
                  </PropRow>
                  <Pick name="水平方向" value="靠左对齐" />
                  <Pick name="垂直方向" value="上下对齐" reset />
                  <Section><TriDown />通用</Section>
                  <Switch name="可用性" value />
                  <Pick name="可见性" value="可见不可交互仅自身" />
                  <Section><TriDown />渲染</Section>
                  <PropRow><PropName /><PropValue><Choice /><Choice /></PropValue></PropRow>
                </PropList>
                <PropThumb $h={181} />
              </PropScroll>
            </Body>
            <Callout />
          </Panel>
        </Column>
      </Work>

      <TaskBar>
        <TaskSearch>
          <svg width="12" height="8" fill="none" stroke="#b08a5a" aria-hidden="true"><path d="M2 1l3 6M8 0v3L6 7M4 1l1 2" /></svg>
          <svg width="14" height="8" aria-hidden="true"><path fill="#8fc31f" d="M0 6c2-4 5-5 9-6l-1 8H0z" /></svg>
        </TaskSearch>
        <TaskItem />
        <TaskTime>16:24</TaskTime>
        <TaskEdge />
      </TaskBar>
    </Shell>
  );
}
